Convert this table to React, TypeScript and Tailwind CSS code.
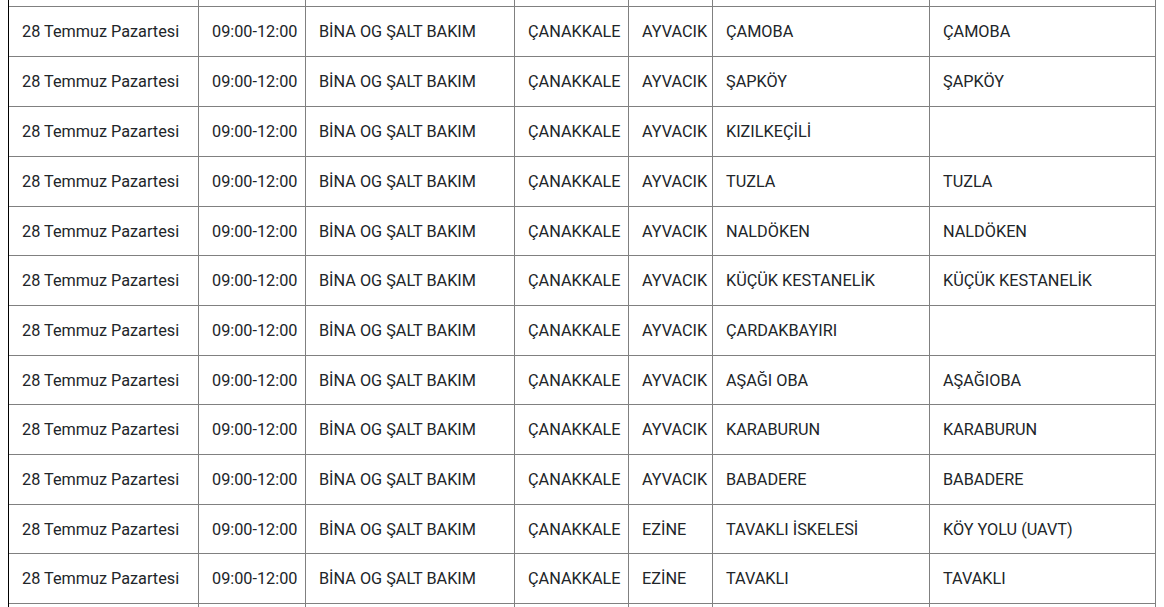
import React from "react";

type Row = { ilce: string; mah: string; sokak: string; h: string };

const rows: Row[] = [
  { ilce: "AYVACIK", mah: "ÇAMOBA", sokak: "ÇAMOBA", h: "h-[50px]" },
  { ilce: "AYVACIK", mah: "ŞAPKÖY", sokak: "ŞAPKÖY", h: "h-[50px]" },
  { ilce: "AYVACIK", mah: "KIZILKEÇİLİ", sokak: "", h: "h-[50px]" },
  { ilce: "AYVACIK", mah: "TUZLA", sokak: "TUZLA", h: "h-[50px]" },
  { ilce: "AYVACIK", mah: "NALDÖKEN", sokak: "NALDÖKEN", h: "h-[49px]" },
  { ilce: "AYVACIK", mah: "KÜÇÜK KESTANELİK", sokak: "KÜÇÜK KESTANELİK", h: "h-[50px]" },
  { ilce: "AYVACIK", mah: "ÇARDAKBAYIRI", sokak: "", h: "h-[50px]" },
  { ilce: "AYVACIK", mah: "AŞAĞI OBA", sokak: "AŞAĞIOBA", h: "h-[49px]" },
  { ilce: "AYVACIK", mah: "KARABURUN", sokak: "KARABURUN", h: "h-[50px]" },
  { ilce: "AYVACIK", mah: "BABADERE", sokak: "BABADERE", h: "h-[50px]" },
  { ilce: "EZİNE", mah: "TAVAKLI İSKELESİ", sokak: "KÖY YOLU (UAVT)", h: "h-[49px]" },
  { ilce: "EZİNE", mah: "TAVAKLI", sokak: "TAVAKLI", h: "h-[50px]" },
];

const widths = [
  "w-[190px]",
  "w-[107px]",
  "w-[209px]",
  "w-[114px]",
  "w-[84px]",
  "w-[217px]",
  "w-[226px]",
];

function Cells({ values }: { values: string[] }) {
  return (
    <>
      {values.map((v, i) => (
        <div
          key={i}
          className={`${widths[i]} shrink-0 border-r border-[#808080] pl-[13px] pr-2 pt-[2px] flex items-center whitespace-nowrap overflow-hidden`}
        >
          {v}
        </div>
      ))}
    </>
  );
}

export default function App() {
  const empty = ["", "", "", "", "", "", ""];
  return (
    <div
      className="w-[1164px] h-[607px] overflow-hidden bg-white text-[16.25px] text-[#212529]"
      style={{ fontFamily: "Roboto, 'Noto Sans', sans-serif" }}
    >
      <div className="ml-[8px] w-[1148px] border-l border-black flex flex-col">
        <div className="flex h-[7px] border-b border-[#808080]">
          <Cells values={empty} />
        </div>
        {rows.map((r, i) => (
          <div key={i} className={`flex ${r.h} border-b border-[#808080]`}>
            <Cells
              values={[
                "28 Temmuz Pazartesi",
                "09:00-12:00",
                "BİNA OG ŞALT BAKIM",
                "ÇANAKKALE",
                r.ilce,
                r.mah,
                r.sokak,
              ]}
            />
          </div>
        ))}
        <div className="flex h-[10px]">
          <Cells values={empty} />
        </div>
      </div>
    </div>
  );
}
